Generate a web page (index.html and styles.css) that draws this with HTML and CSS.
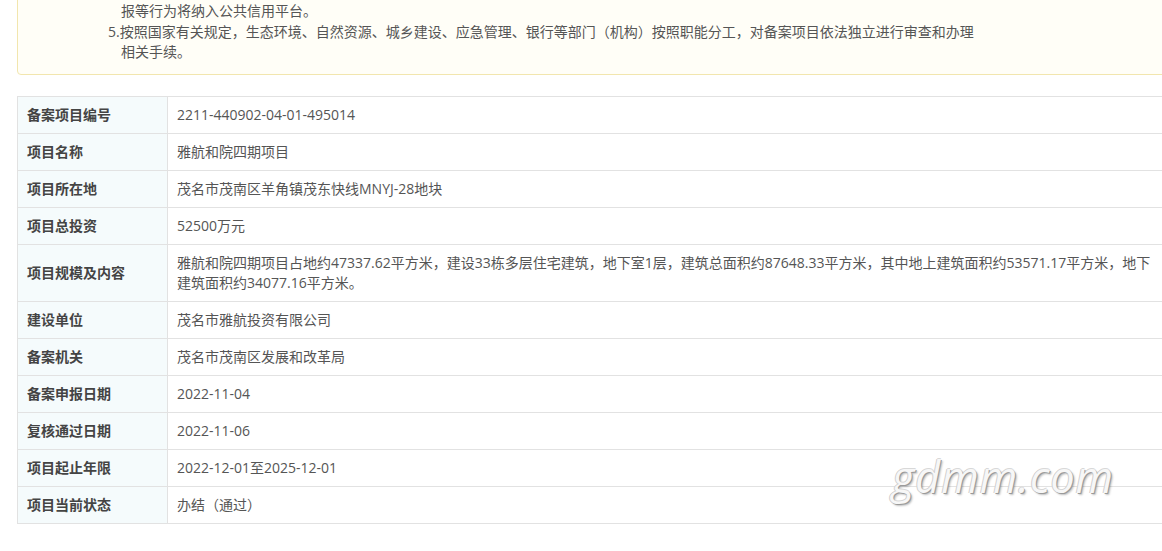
FILE: index.html
```html
<!DOCTYPE html>
<html lang="zh-CN">
<head>
    <meta charset="UTF-8">
    <meta name="viewport" content="width=device-width, initial-scale=1.0">
    <title>项目备案信息</title>
    <link rel="stylesheet" href="styles.css">
</head>
<body>
    <div class="page">
        <!-- 备案须知 -->
        <div class="notice">
            <p class="notice-item notice-cont">报等行为将纳入公共信用平台。</p>
            <p class="notice-item">5.按照国家有关规定，生态环境、自然资源、城乡建设、应急管理、银行等部门（机构）按照职能分工，对备案项目依法独立进行审查和办理相关手续。</p>
        </div>

        <!-- 备案信息表 -->
        <table class="info-table">
            <tr><th>备案项目编号</th><td>2211-440902-04-01-495014</td></tr>
            <tr><th>项目名称</th><td>雅航和院四期项目</td></tr>
            <tr><th>项目所在地</th><td>茂名市茂南区羊角镇茂东快线MNYJ-28地块</td></tr>
            <tr><th>项目总投资</th><td>52500万元</td></tr>
            <tr><th>项目规模及内容</th><td>雅航和院四期项目占地约47337.62平方米，建设33栋多层住宅建筑，地下室1层，建筑总面积约87648.33平方米，其中地上建筑面积约53571.17平方米，地下建筑面积约34077.16平方米。</td></tr>
            <tr><th>建设单位</th><td>茂名市雅航投资有限公司</td></tr>
            <tr><th>备案机关</th><td>茂名市茂南区发展和改革局</td></tr>
            <tr><th>备案申报日期</th><td>2022-11-04</td></tr>
            <tr><th>复核通过日期</th><td>2022-11-06</td></tr>
            <tr><th>项目起止年限</th><td>2022-12-01至2025-12-01</td></tr>
            <tr><th>项目当前状态</th><td>办结（通过）</td></tr>
        </table>

        <div class="watermark">gdmm.com</div>
    </div>
</body>
</html>
```

FILE: styles.css
```css
/* 页面 */
html, body {
    overflow: hidden;
}

body {
    margin: 0;
    font-family: "Open Sans", "Noto Sans CJK SC", sans-serif;
    font-size: 14px;
    color: #555;
    background-color: #fff;
}

.page {
    position: relative;
    padding-left: 17px;
    height: 551px;
}

/* 须知框 */
.notice {
    width: 1160px;
    margin-top: -17px;
    padding: 17px 0 11px;
    background-color: #fffef7;
    border: 1px solid #f2e6ae;
    border-radius: 4px;
    box-sizing: border-box;
}

.notice-item {
    margin: 0;
    padding: 0 190px 0 103px;
    text-indent: -13px;
    line-height: 20.5px;
}

.notice-cont {
    text-indent: 0;
}

/* 信息表 */
.info-table {
    margin-top: 21px;
    width: 1146px;
    border-collapse: collapse;
}

.info-table th,
.info-table td {
    border: 1px solid #e2e2e2;
    padding: 8px 9px;
    line-height: 20px;
    text-align: left;
    vertical-align: middle;
}

.info-table th {
    width: 131px;
    padding-left: 9px;
    background-color: #f5fbfc;
    color: #444;
    font-weight: bold;
}

.info-table td {
    color: #555;
}

/* 水印 */
.watermark {
    position: absolute;
    left: 892px;
    top: 464px;
    font-family: "Open Sans", "DejaVu Sans", sans-serif;
    font-style: italic;
    font-size: 43px;
    letter-spacing: 1px;
    color: #f7f7f7;
    text-shadow: 1px 1px 0 #9a9a9a, -1px 0 0 #cfcfcf, 0 -1px 0 #d8d8d8, 2px 2px 2px rgba(0, 0, 0, 0.25);
}
```
